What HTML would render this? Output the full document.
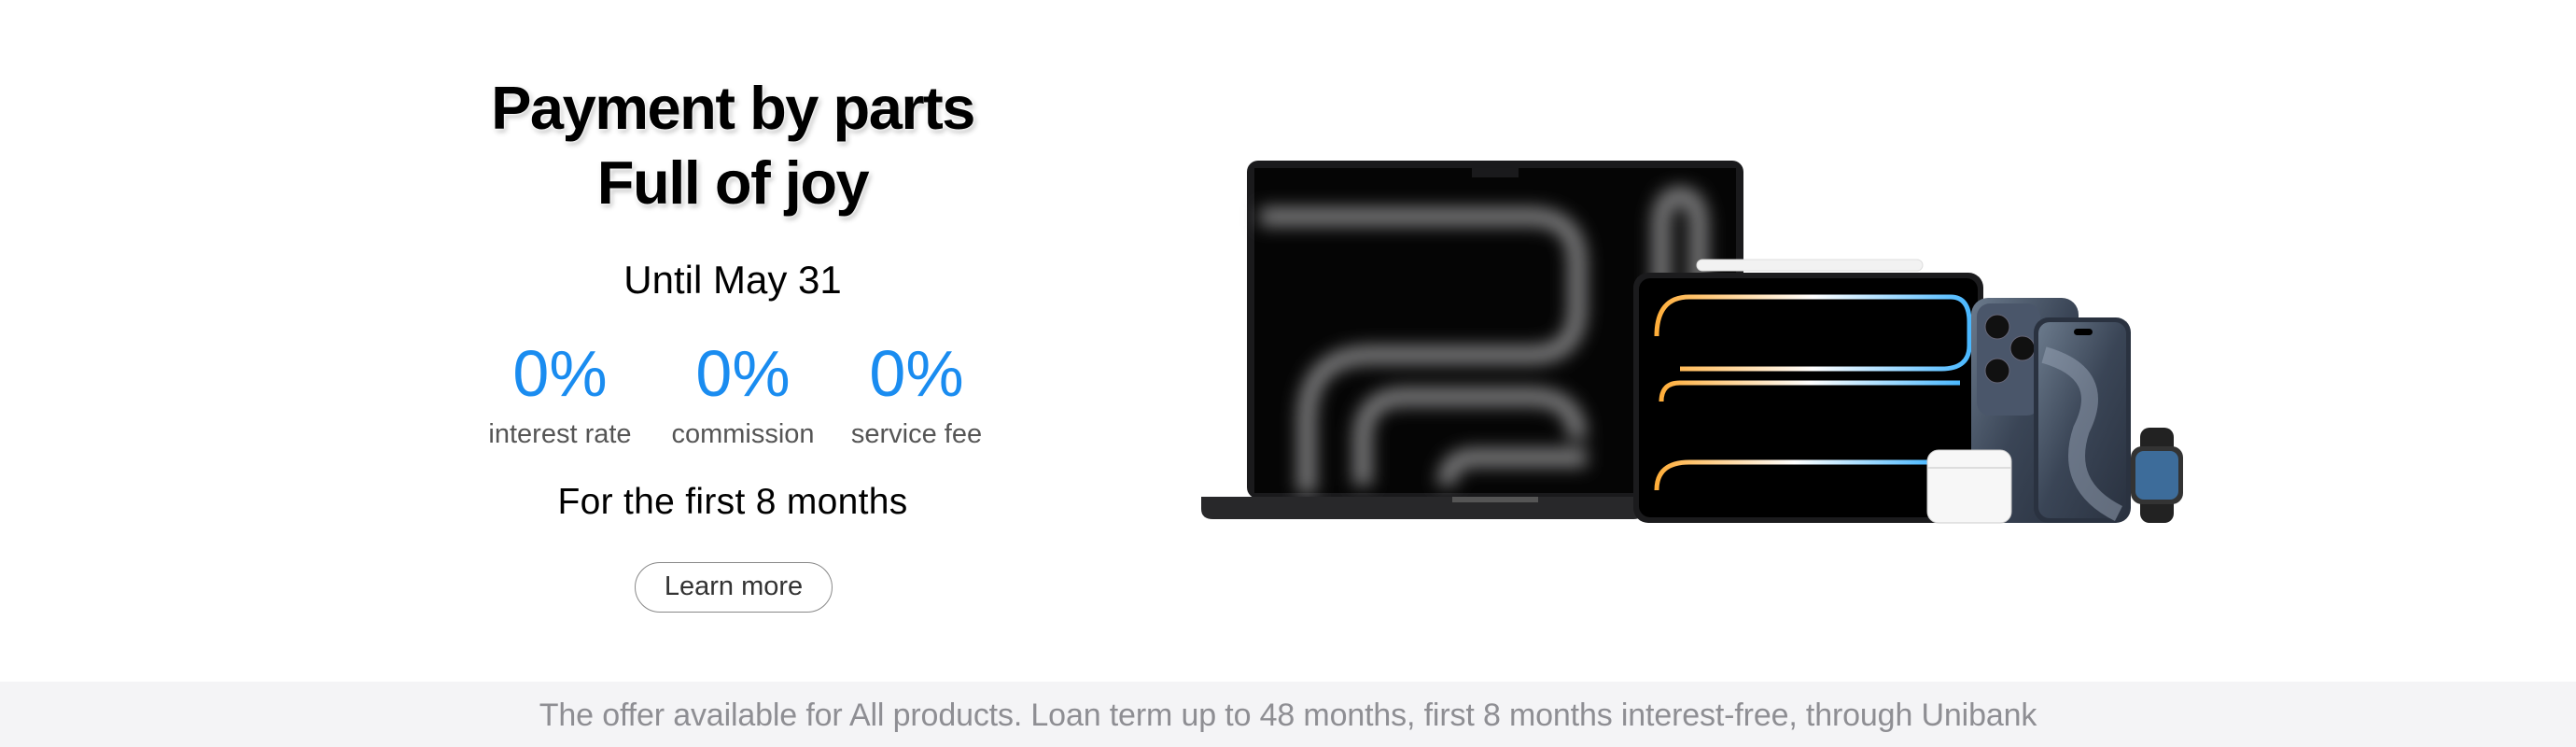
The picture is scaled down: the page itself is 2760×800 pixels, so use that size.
<!DOCTYPE html>
<html><head><meta charset="utf-8"><style>
*{margin:0;padding:0;box-sizing:border-box}
body{width:2760px;height:800px;background:#fff;position:relative;overflow:hidden;font-family:"Liberation Sans",sans-serif}
.a{position:absolute;white-space:nowrap}
.c{transform:translateX(-50%)}
.title{font-size:65px;font-weight:bold;color:#000;letter-spacing:-1.5px;text-shadow:0 0 2px #fff,0 0 4px #fff,0 0 6px #fff,2px 3px 6px rgba(0,0,0,.3)}
.pct{font-size:70px;color:#1a8cf0}
.lbl{font-size:29px;color:#555}
</style></head><body>
<div class="a c title" style="left:785px;top:76px;line-height:80px">Payment by parts</div>
<div class="a c title" style="left:785px;top:156px;line-height:80px">Full of joy</div>
<div class="a c" style="left:785px;top:270px;font-size:42px;line-height:60px;color:#000">Until May 31</div>
<div class="a c pct" style="left:600px;top:360px;line-height:80px">0%</div>
<div class="a c pct" style="left:796px;top:360px;line-height:80px">0%</div>
<div class="a c pct" style="left:982px;top:360px;line-height:80px">0%</div>
<div class="a c lbl" style="left:600px;top:445px;line-height:40px">interest rate</div>
<div class="a c lbl" style="left:796px;top:445px;line-height:40px">commission</div>
<div class="a c lbl" style="left:982px;top:445px;line-height:40px">service fee</div>
<div class="a c" style="left:785px;top:513px;font-size:39px;line-height:50px;color:#000;letter-spacing:0.3px">For the first 8 months</div>
<div class="a" style="left:680px;top:602px;width:212px;height:54px;border:1.5px solid #888;border-radius:28px;font-size:29px;color:#333;text-align:center;line-height:51px">Learn more</div>

<svg class="a" style="left:0;top:0" width="2760" height="730" viewBox="0 0 2760 730">
<defs>
<filter id="bl" x="-20%" y="-20%" width="140%" height="140%"><feGaussianBlur stdDeviation="9"/></filter>
<linearGradient id="tb" x1="0" x2="1"><stop offset="0" stop-color="#ffae3a"/><stop offset=".5" stop-color="#fff"/><stop offset="1" stop-color="#4ab8ff"/></linearGradient>
<linearGradient id="ti" x1="0" x2="1" y1="0" y2="1"><stop offset="0" stop-color="#6b7a8c"/><stop offset=".5" stop-color="#3a4556"/><stop offset="1" stop-color="#2a3240"/></linearGradient>
</defs>
<rect x="1336" y="172" width="532" height="362" rx="12" fill="#1a1a1c"/>
<rect x="1344" y="180" width="516" height="348" fill="#050505"/>
<rect x="1577" y="180" width="50" height="10" fill="#1a1a1c"/>
<g filter="url(#bl)" fill="none" stroke="#7a7a7c" stroke-width="20">
<path d="M1350 232 H1640 Q1690 232 1690 282 V330 Q1690 380 1640 380 H1470 Q1400 380 1400 450 V528"/>
<path d="M1460 520 V470 Q1460 425 1505 425 H1640 Q1690 425 1690 470 V470"/>
<path d="M1780 528 V240 Q1780 210 1800 210 Q1820 210 1820 240 V528"/>
<path d="M1550 520 Q1550 490 1580 490 H1700"/>
</g>
<path d="M1287 532 H1760 V548 Q1760 556 1750 556 H1300 Q1287 556 1287 545 Z" fill="#28282a"/>
<rect x="1556" y="532" width="92" height="6" fill="#555"/>
<rect x="1818" y="278" width="242" height="12" rx="6" fill="#f2f2f2" stroke="#ddd"/>
<rect x="1750" y="292" width="375" height="268" rx="16" fill="#1b1b1d"/>
<rect x="1756" y="298" width="363" height="256" rx="12" fill="#000"/>
<g fill="none" stroke="url(#tb)" stroke-width="5">
<path d="M1775 360 Q1775 318 1810 318 H2090 Q2110 318 2110 345 V370 Q2110 395 2080 395 H1800"/>
<path d="M1780 430 Q1780 410 1800 410 H2100"/>
<path d="M1775 525 Q1775 495 1810 495 H2070"/>
</g>
<rect x="2112" y="319" width="115" height="241" rx="18" fill="url(#ti)"/>
<rect x="2118" y="325" width="68" height="120" rx="14" fill="#4a566a"/>
<circle cx="2140" cy="350" r="13" fill="#111" stroke="#667"/>
<circle cx="2140" cy="397" r="13" fill="#111" stroke="#667"/>
<circle cx="2167" cy="373" r="13" fill="#111" stroke="#667"/>
<rect x="2179" y="340" width="104" height="220" rx="16" fill="#2a3240"/>
<rect x="2184" y="345" width="94" height="210" rx="12" fill="url(#ti)"/>
<path d="M2190 380 Q2260 400 2230 460 Q2210 520 2270 550" fill="none" stroke="#9aa6b8" stroke-width="18" opacity=".5"/>
<rect x="2222" y="352" width="20" height="7" rx="3.5" fill="#000"/>
<rect x="2065" y="482" width="90" height="78" rx="12" fill="#f7f7f7" stroke="#ccc"/>
<rect x="2065" y="500" width="90" height="2" fill="#ddd"/>
<rect x="2293" y="458" width="36" height="102" rx="10" fill="#222"/>
<rect x="2283" y="478" width="56" height="62" rx="12" fill="#333"/>
<rect x="2288" y="483" width="46" height="52" rx="9" fill="#3d6c9a"/>
</svg>

<div class="a" style="left:0;top:730px;width:2760px;height:70px;background:#f4f4f6"></div>
<div class="a c" style="left:1380px;top:746px;font-size:34px;line-height:40px;color:#8e8e93;letter-spacing:-0.15px">The offer available for All products. Loan term up to 48 months, first 8 months interest-free, through Unibank</div>
</body></html>
